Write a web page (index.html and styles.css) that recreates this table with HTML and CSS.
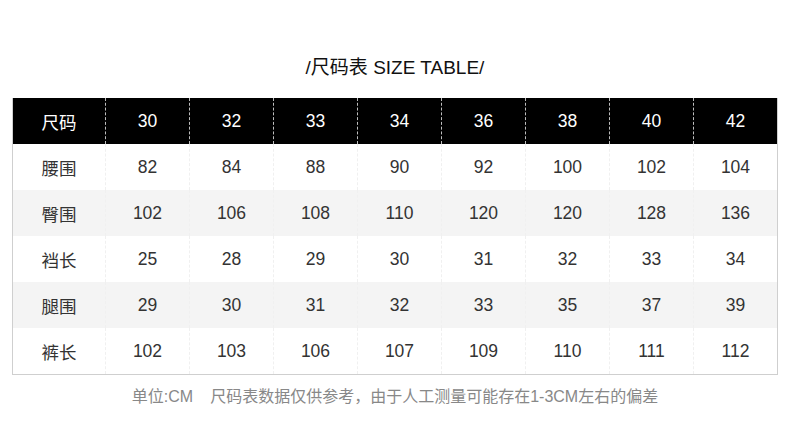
FILE: index.html
```html
<!DOCTYPE html>
<html>
<head>
<meta charset="utf-8">
<link rel="stylesheet" href="styles.css">
</head>
<body>
<div class="page">
  <h1 class="title">/尺码表 SIZE TABLE/</h1>
  <div class="table">
    <div class="row head">
      <div class="cell first">尺码</div><div class="cell">30</div><div class="cell">32</div><div class="cell">33</div><div class="cell">34</div><div class="cell">36</div><div class="cell">38</div><div class="cell">40</div><div class="cell">42</div>
    </div>
    <div class="row">
      <div class="cell first">腰围</div><div class="cell">82</div><div class="cell">84</div><div class="cell">88</div><div class="cell">90</div><div class="cell">92</div><div class="cell">100</div><div class="cell">102</div><div class="cell">104</div>
    </div>
    <div class="row alt">
      <div class="cell first">臀围</div><div class="cell">102</div><div class="cell">106</div><div class="cell">108</div><div class="cell">110</div><div class="cell">120</div><div class="cell">120</div><div class="cell">128</div><div class="cell">136</div>
    </div>
    <div class="row">
      <div class="cell first">裆长</div><div class="cell">25</div><div class="cell">28</div><div class="cell">29</div><div class="cell">30</div><div class="cell">31</div><div class="cell">32</div><div class="cell">33</div><div class="cell">34</div>
    </div>
    <div class="row alt">
      <div class="cell first">腿围</div><div class="cell">29</div><div class="cell">30</div><div class="cell">31</div><div class="cell">32</div><div class="cell">33</div><div class="cell">35</div><div class="cell">37</div><div class="cell">39</div>
    </div>
    <div class="row">
      <div class="cell first">裤长</div><div class="cell">102</div><div class="cell">103</div><div class="cell">106</div><div class="cell">107</div><div class="cell">109</div><div class="cell">110</div><div class="cell">111</div><div class="cell">112</div>
    </div>
  </div>
  <p class="note">单位:CM<span class="gap"></span>尺码表数据仅供参考，由于人工测量可能存在1-3CM左右的偏差</p>
</div>
</body>
</html>
```
FILE: styles.css
```css
html, body {
  margin: 0;
  padding: 0;
  background: #fff;
}
body {
  font-family: "Liberation Sans", "Noto Sans CJK SC", sans-serif;
  color: #333;
}
.page {
  width: 790px;
  height: 433px;
  padding-top: 54px;
  box-sizing: border-box;
}
.title {
  margin: 0;
  font-size: 19px;
  font-weight: normal;
  line-height: 28px;
  height: 28px;
  text-align: center;
  color: #111;
  margin-bottom: 16px;
}
.table {
  margin-left: 12px;
  width: 764px;
  border: 1px solid #cfcfcf;
  border-top: none;
}
.row {
  display: grid;
  grid-template-columns: 92px repeat(8, 84px);
  height: 46px;
  background: #fff;
}
.row.alt {
  background: #f4f4f4;
}
.row.head {
  background: #000;
  color: #fff;
}
.cell {
  display: flex;
  align-items: center;
  justify-content: center;
  font-size: 17.5px;
  border-left: 1px dashed #f0f0f0;
}
.cell.first {
  border-left: none;
}
.head .cell {
  border-left-color: #bdbdbd;
}
.note {
  margin: 12px 0 0;
  text-align: center;
  font-size: 16px;
  line-height: 20px;
  color: #888;
}
.gap {
  display: inline-block;
  width: 17px;
}
```
